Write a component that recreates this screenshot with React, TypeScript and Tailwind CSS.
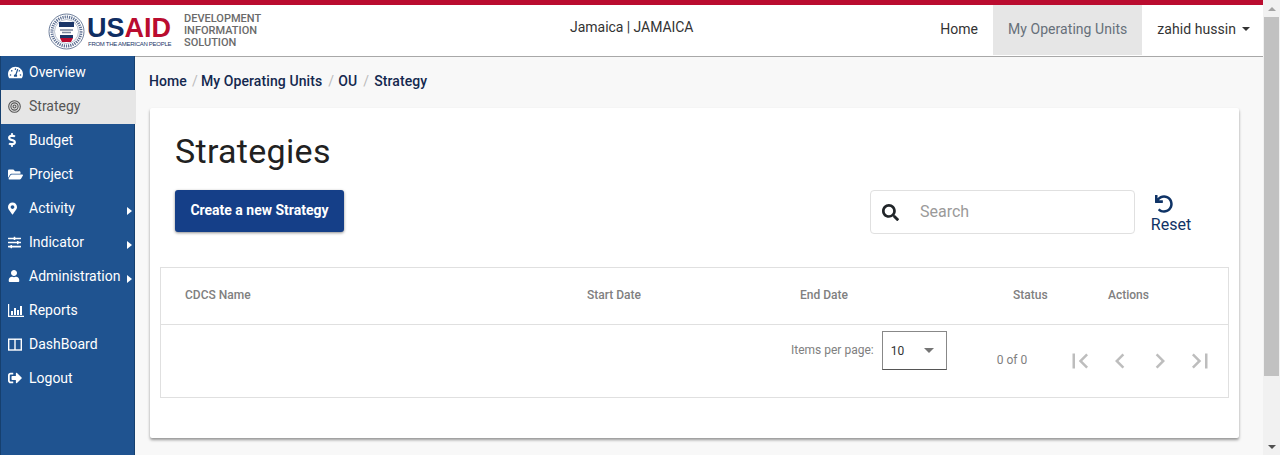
import React from "react";
import { FaDollarSign, FaFolderOpen, FaMapMarkerAlt, FaSearch, FaSignOutAlt, FaSlidersH, FaTachometerAlt, FaUndo, FaUser } from "react-icons/fa";

const ROBOTO = "font-['Roboto',sans-serif]";

const ColumnsIcon = () => (
  <svg width="14" height="13" viewBox="0 0 14 13" fill="none" stroke="currentColor" strokeWidth="1.4">
    <rect x="0.7" y="1.2" width="12.6" height="10.8" />
    <path d="M7 1v11" />
  </svg>
);

const TargetIcon = () => (
  <svg width="13" height="13" viewBox="0 0 13 13" fill="none" stroke="currentColor" strokeWidth="1.1">
    <circle cx="6.5" cy="6.5" r="5.8" />
    <circle cx="6.5" cy="6.5" r="3.6" />
    <circle cx="6.5" cy="6.5" r="1.5" />
  </svg>
);

const ReportIcon = () => (
  <svg width="16" height="13" viewBox="0 0 16 13" fill="currentColor">
    <path d="M0 0h1.2v11.8H16V13H0z" />
    <path d="M3 7h2v4H3zM6 4h2v7H6zM9 6h2v5H9zM12 2h2v9h-2z" />
  </svg>
);

const NAV_ITEMS = [
  { label: "Overview", icon: <FaTachometerAlt size={15} /> },
  { label: "Strategy", icon: <TargetIcon />, active: true },
  { label: "Budget", icon: <FaDollarSign size={14} className="h-[14px] w-[8px]" /> },
  { label: "Project", icon: <FaFolderOpen size={15} /> },
  { label: "Activity", icon: <FaMapMarkerAlt size={13} className="h-[13px] w-[9px]" />, sub: true },
  { label: "Indicator", icon: <FaSlidersH size={13} />, sub: true },
  { label: "Administration", icon: <FaUser size={12} />, sub: true },
  { label: "Reports", icon: <ReportIcon /> },
  { label: "DashBoard", icon: <ColumnsIcon /> },
  { label: "Logout", icon: <FaSignOutAlt size={14} /> },
];

const COLUMNS = [
  { label: "CDCS Name", width: "w-[402px]" },
  { label: "Start Date", width: "w-[213px]" },
  { label: "End Date", width: "w-[213px]" },
  { label: "Status", width: "w-[95px]" },
  { label: "Actions", width: "w-[80px]" },
];

const PAGER_PATHS = [
  "M18.41 16.59L13.82 12l4.59-4.59L17 6l-6 6 6 6zM6 6h2v12H6z",
  "M15.41 7.41L14 6l-6 6 6 6 1.41-1.41L10.83 12z",
  "M10 6L8.59 7.41 13.17 12l-4.58 4.59L10 18l6-6z",
  "M5.59 7.41L10.18 12l-4.59 4.59L7 18l6-6-6-6zM16 6h2v12h-2z",
];

const Seal = () => (
  <svg width="37" height="37" viewBox="0 0 37 37" className="shrink-0">
    <circle cx="18.5" cy="18.5" r="17.5" fill="#fff" stroke="#6f7f9c" strokeWidth="1" />
    <circle cx="18.5" cy="18.5" r="14.5" fill="none" stroke="#5d6f92" strokeWidth="3" strokeDasharray="1.2 1" />
    <circle cx="18.5" cy="18.5" r="12" fill="#fff" stroke="#8a97b0" strokeWidth="0.6" />
    <rect x="11" y="9" width="15" height="5" fill="#1b3668" />
    <path d="M12 17h13M14 19.5h9" stroke="#7b879d" strokeWidth="1.6" />
    <rect x="12" y="22" width="13" height="3" fill="#1b3668" />
    <path d="M12 25h13l-2 4h-9z" fill="#ba0c2f" />
  </svg>
);

const Header = () => (
  <header className="flex h-[52px] shrink-0 items-start border-b border-[#a8a8a8] bg-white">
    <div className="ml-[48px] mt-[8px] flex items-start">
      <Seal />
      <div className="ml-[2px] mt-[2px] flex w-[88px] flex-col">
        <div className="font-['Liberation_Sans',sans-serif] text-[27px] leading-[26px] font-bold">
          <span className="text-[#0f2d62]">US</span>
          <span className="text-[#ba0c2f]">AID</span>
        </div>
        <div className="pl-px font-['Liberation_Sans',sans-serif] text-[6px] leading-[7px] tracking-[-0.28px] whitespace-nowrap text-[#1b3668]">FROM THE AMERICAN PEOPLE</div>
      </div>
    </div>
    <div className="mt-[8px] ml-[9px] text-[11px] leading-[12px] font-medium text-[#6a6a6a]">
      <div>DEVELOPMENT</div>
      <div>INFORMATION</div>
      <div>SOLUTION</div>
    </div>
    <div className="mt-[13px] ml-[309px] text-sm leading-[18px] tracking-[-0.05px] whitespace-nowrap text-[#333]">Jamaica | JAMAICA</div>
    <nav className="ml-auto mr-[13px] flex h-[50px] items-center text-sm tracking-[0.05px]">
      <a className="px-[15px] pb-[2px] text-[#333]">Home</a>
      <a className="flex h-full items-center bg-[#e6e6e6] px-[15px] pb-[2px] text-[#66707a]">My Operating Units</a>
      <a className="flex items-center pb-[2px] pl-[15px] text-[#333]">
        zahid hussin
        <span className="ml-[6px] h-0 w-0 border-x-[4px] border-t-[4px] border-x-transparent border-t-[#333]" />
      </a>
    </nav>
  </header>
);

const Sidebar = () => (
  <aside className="relative z-10 -mt-px w-[135px] shrink-0 border-x border-x-[#16406f] bg-[#1f5390]">
    {NAV_ITEMS.map((item) => (
      <div
        key={item.label}
        className={`flex h-[34px] items-center pb-[2px] text-sm ${item.active ? "mr-[-2px] bg-[#e6e6e6] text-[#555]" : "text-white"}`}
      >
        <span className="ml-[7px] flex w-[21px] shrink-0 items-center">{item.icon}</span>
        <span className="whitespace-nowrap">{item.label}</span>
        {item.sub && <span className="mt-[5px] ml-auto mr-[2px] h-0 w-0 border-y-[4px] border-l-[5px] border-y-transparent border-l-white" />}
      </div>
    ))}
  </aside>
);

const Crumbs = () => (
  <div className="ml-[14px] flex h-[51px] items-center pb-[3px] text-sm font-medium tracking-[0.1px] whitespace-nowrap text-[#14284f]">
    <span>Home</span>
    <span className="ml-[5px] mr-[3px] font-normal text-[#bbb]">/</span>
    <span>My Operating Units</span>
    <span className="ml-[6px] mr-[4px] font-normal text-[#bbb]">/</span>
    <span>OU</span>
    <span className="ml-[6px] mr-[5px] font-normal text-[#bbb]">/</span>
    <span>Strategy</span>
  </div>
);

const Card = () => (
  <section className="ml-[15px] mr-[24px] h-[330px] rounded-[2px] bg-white pt-[20px] shadow-[0_2px_3px_rgba(0,0,0,0.4)]">
    <h1 className="ml-[25px] text-[34px] leading-[46px] font-normal tracking-[0.3px] text-[#212121]">Strategies</h1>
    <div className="mt-[16px] flex h-[61px] items-start">
      <button className="ml-[25px] h-[42px] w-[169px] rounded-[3px] bg-[#153f88] pb-[2px] text-sm font-bold text-white shadow-[0_1px_3px_rgba(0,0,0,0.45)]">
        Create a new Strategy
      </button>
      <div className="ml-[526px] flex h-[44px] w-[265px] items-center rounded-[4px] border border-[#e0e0e0] bg-white">
        <FaSearch size={17} className="ml-[11px] text-[#212529]" />
        <span className="ml-[21px] text-base text-[#9a9a9a]">Search</span>
      </div>
      <div className="ml-[16px] flex w-[40px] flex-col items-center text-[#0f3366]">
        <FaUndo size={18} className="mt-[5px] mr-[14px]" />
        <span className="mt-[2px] text-base leading-[20px]">Reset</span>
      </div>
    </div>
    <div className="mx-[10px] mt-[16px] h-[131px] border border-[#e0e0e0]">
      <div className="flex h-[57px] items-center border-b border-[#e0e0e0] pb-[2px] pl-[24px] text-xs font-medium text-[#808080]">
        {COLUMNS.map((col) => (
          <div key={col.label} className={col.width}>{col.label}</div>
        ))}
      </div>
      <div className="flex text-xs text-[#808080]">
        <div className="ml-[630px] mt-[18px] leading-[14px] whitespace-nowrap">Items per page:</div>
        <div className="ml-[8px] mt-[6px] flex h-[39px] w-[65px] items-center border border-[#888] border-b-[#555] pl-[8px] text-[#333]">
          10
          <span className="ml-auto mr-[12px] h-0 w-0 border-x-[5px] border-t-[5px] border-x-transparent border-t-[#757575]" />
        </div>
        <div className="ml-[50px] mt-[28px] leading-[14px] whitespace-nowrap">0 of 0</div>
        <div className="ml-[33px] mt-[16px] flex">
          {PAGER_PATHS.map((d) => (
            <span key={d} className="flex h-[40px] w-[40px] items-center justify-center">
              <svg width="30" height="30" viewBox="0 0 24 24" fill="#000" fillOpacity="0.26"><path d={d} /></svg>
            </span>
          ))}
        </div>
      </div>
    </div>
  </section>
);

const Scrollbar = () => (
  <div className="flex h-full w-[17px] shrink-0 flex-col items-center bg-[#f1f1f1]">
    <div className="flex h-[17px] w-full items-center justify-center">
      <span className="h-0 w-0 border-x-[4px] border-b-[4px] border-x-transparent border-b-[#a3a3a3]" />
    </div>
    <div className="h-[359px] w-[15px] bg-[#c1c1c1]" />
    <div className="mt-auto flex h-[17px] w-full items-center justify-center">
      <span className="h-0 w-0 border-x-[4px] border-t-[4px] border-x-transparent border-t-[#505050]" />
    </div>
  </div>
);

export default function App() {
  return (
    <div className={`flex h-[455px] w-[1280px] overflow-hidden bg-[#f8f8f8] ${ROBOTO}`}>
      <div className="flex w-[1263px] shrink-0 flex-col">
        <div className="h-[5px] shrink-0 bg-[#ba0c2f]" />
        <Header />
        <div className="flex min-h-0 flex-1">
          <Sidebar />
          <main className="min-w-0 flex-1">
            <Crumbs />
            <Card />
          </main>
        </div>
      </div>
      <Scrollbar />
    </div>
  );
}
